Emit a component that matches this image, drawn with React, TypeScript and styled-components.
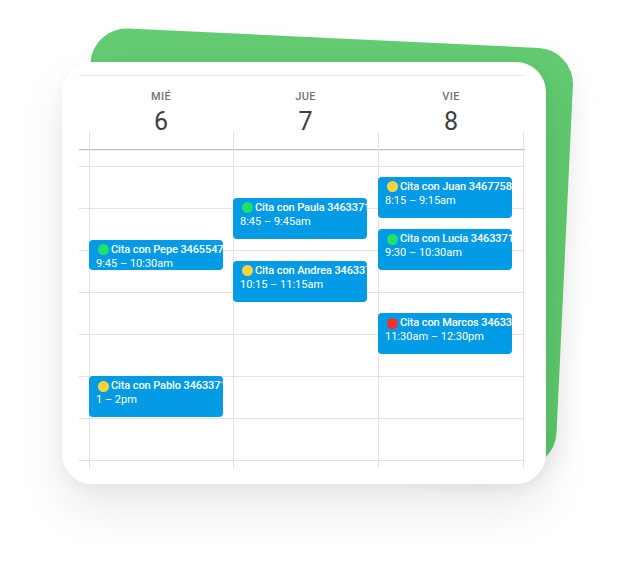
import React from 'react'
import styled, { createGlobalStyle } from 'styled-components'

/**
 * ------------------------ TYPES ------------------------------
 */
type DotColor = 'green' | 'yellow' | 'red'

interface Appointment {
  title: string
  start: number
  end: number
  label: string
  dot: DotColor
}

interface Day {
  name: string
  date: number
  items: Appointment[]
}

/**
 * ------------------------ DATA ------------------------------
 */
const HOUR = 42
const FIRST_HOUR_TOP = 34

const days: Day[] = [
  {
    name: 'MIÉ',
    date: 6,
    items: [
      { title: 'Cita con Pepe 3465547812', start: 9.75, end: 10.5, label: '9:45 – 10:30am', dot: 'green' },
      { title: 'Cita con Pablo 3463371904', start: 13, end: 14, label: '1 – 2pm', dot: 'yellow' },
    ],
  },
  {
    name: 'JUE',
    date: 7,
    items: [
      { title: 'Cita con Paula 3463371245', start: 8.75, end: 9.75, label: '8:45 – 9:45am', dot: 'green' },
      { title: 'Cita con Andrea 3463379021', start: 10.25, end: 11.25, label: '10:15 – 11:15am', dot: 'yellow' },
    ],
  },
  {
    name: 'VIE',
    date: 8,
    items: [
      { title: 'Cita con Juan 3467758120', start: 8.25, end: 9.25, label: '8:15 – 9:15am', dot: 'yellow' },
      { title: 'Cita con Lucia 3463371678', start: 9.5, end: 10.5, label: '9:30 – 10:30am', dot: 'green' },
      { title: 'Cita con Marcos 3463398541', start: 11.5, end: 12.5, label: '11:30am – 12:30pm', dot: 'red' },
    ],
  },
]

const dotColors: Record<DotColor, string> = {
  green: '#1fe06a',
  yellow: '#fdd33a',
  red: '#f5302e',
}

/**
 * ------------------------- STYLES -------------------------------
 */
const GlobalStyle = createGlobalStyle`
  html, body {
    margin: 0;
    padding: 0;
    background: #ffffff;
  }
  body {
    font-family: Roboto, "Liberation Sans", Arial, sans-serif;
  }
`

const Page = styled.div`
  position: relative;
  width: 622px;
  height: 566px;
  overflow: hidden;
  padding: 62px 0 0 62px;
  box-sizing: border-box;
`

// tilted green sheet behind the card
const Backdrop = styled.div`
  position: absolute;
  left: 82px;
  top: 38px;
  width: 483px;
  height: 420px;
  border-radius: 36px;
  background: linear-gradient(160deg, #64cb72 0%, #5cc66b 100%);
  transform: rotate(2.7deg);
  box-shadow: 6px 10px 24px rgba(0, 0, 0, 0.06);
`

const Card = styled.section`
  position: relative;
  z-index: 1;
  width: 484px;
  height: 422px;
  box-sizing: border-box;
  padding: 13px 0 0 17px;
  background: #ffffff;
  border-radius: 30px;
  box-shadow: 0 24px 48px rgba(0, 0, 0, 0.09), 0 4px 14px rgba(0, 0, 0, 0.04);
`

const TopRule = styled.div`
  width: 446px;
  border-top: 1px solid #e8e8e8;
`

const DayGrid = styled.div`
  display: grid;
  grid-template-columns: 144px 145px 146px;
  margin-left: 10px;
`

const HeaderRow = styled(DayGrid)`
  height: 56px;
`

const DayHead = styled.div`
  text-align: center;
  padding-top: 14px;
`

const DayName = styled.div`
  font-size: 11px;
  line-height: 14px;
  font-weight: 500;
  letter-spacing: 0.3px;
  color: #70757a;
`

const DayNumber = styled.div`
  margin-top: 6px;
  font-size: 25px;
  line-height: 24px;
  font-weight: 400;
  color: #3c4043;
`

// hour lines are painted as a background under the columns
const Board = styled.div`
  width: 446px;
  height: 336px;
  background:
    linear-gradient(#c4c4c4, #c4c4c4) 0 17px / 100% 1px no-repeat,
    linear-gradient(#ececec, #ececec) 0 18px / 100% 1px no-repeat,
    repeating-linear-gradient(to bottom, #e2e2e2 0 1px, transparent 1px 42px) 0 34px / 100% 295px no-repeat;
`

const Columns = styled(DayGrid)`
  height: 100%;
`

const Column = styled.div<{ $last?: boolean }>`
  position: relative;
  box-sizing: border-box;
  border-left: 1px solid #e2e2e2;
  ${props => props.$last && `border-right: 1px solid #e2e2e2;`}
`

const Event = styled.div`
  position: absolute;
  left: -1px;
  width: 134px;
  box-sizing: border-box;
  padding: 3px 0 0 7px;
  background: #039be5;
  border-radius: 4px;
  color: #ffffff;
  overflow: hidden;
  white-space: nowrap;
  font-size: 11px;
  line-height: 14px;
`

const Title = styled.div`
  display: flex;
  align-items: center;
  font-weight: 500;
  letter-spacing: -0.1px;
`

const Dot = styled.span<{ $color: DotColor }>`
  flex: none;
  width: 11px;
  height: 11px;
  margin: 0 2px 0 2px;
  border-radius: 50%;
  background: ${props => dotColors[props.$color]};
`

const Time = styled.div`
  font-weight: 400;
`

/**
 * ----------------------- COMPONENT -------------------------------
 */
const App: React.FC = () => {
  return (
    <>
      <GlobalStyle />
      <Page>
        <Backdrop />
        <Card>
          <TopRule />
          <HeaderRow>
            {days.map(day => (
              <DayHead key={day.name}>
                <DayName>{day.name}</DayName>
                <DayNumber>{day.date}</DayNumber>
              </DayHead>
            ))}
          </HeaderRow>
          <Board>
            <Columns>
              {days.map((day, i) => (
                <Column key={day.name} $last={i === days.length - 1}>
                  {day.items.map(item => (
                    <Event
                      key={item.title}
                      style={{
                        top: FIRST_HOUR_TOP + (item.start - 8) * HOUR,
                        height: (item.end - item.start) * HOUR - 1,
                      }}
                    >
                      <Title>
                        <Dot $color={item.dot} />
                        {item.title}
                      </Title>
                      <Time>{item.label}</Time>
                    </Event>
                  ))}
                </Column>
              ))}
            </Columns>
          </Board>
        </Card>
      </Page>
    </>
  )
}

export default App
